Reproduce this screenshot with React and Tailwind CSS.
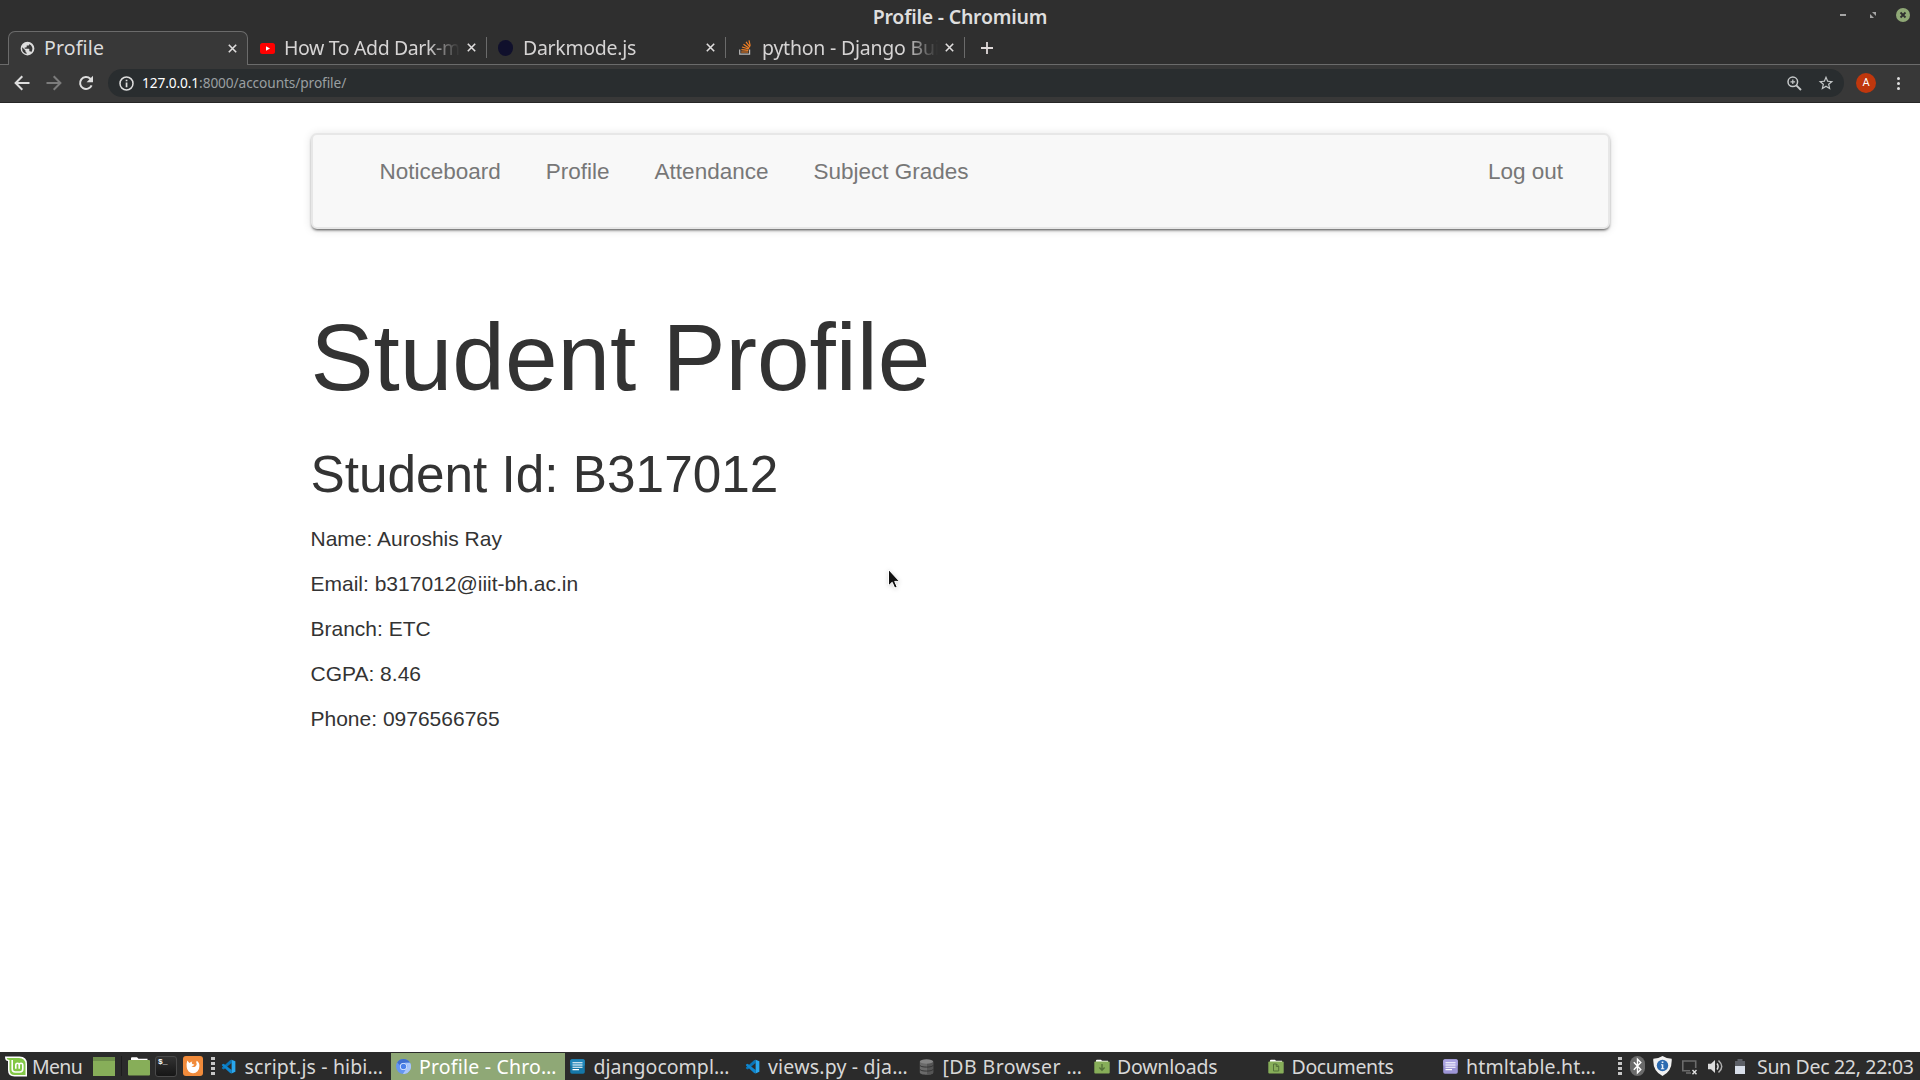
import React from "react";

const UI = "font-['Noto_Sans','Open_Sans',sans-serif]";
const WEB = "font-['Liberation_Sans',Arial,sans-serif]";

const Globe = () => (
  <svg className="size-[15px] shrink-0" viewBox="0 0 24 24" fill="#dedede">
    <path d="M12 1a11 11 0 1 0 0 22 11 11 0 0 0 0-22Zm-1.500 19.600A8.700 8.700 0 0 1 3.400 12c0-.7.1-1.300.2-1.900l5.200 5.200v1c0 1.200.6 2 1.700 2.100v2.200Zm7.400-2.700c-.3-.9-1-1.500-2-1.500h-1v-3.100c0-.6-.4-1-1-1H7.500v-2.100h2.200c.6 0 1-.5 1-1V7.100h2.200c1.100 0 2-.9 2-2v-.5a8.700 8.700 0 0 1 3 13.300Z" />
  </svg>
);
const YouTube = () => (
  <svg className="mt-0.5 h-[11px] w-[15px] shrink-0" viewBox="0 0 15 11">
    <rect width="15" height="11" rx="2.500" fill="#ff0000" />
    <path d="M6 3.200v4.600l4-2.300Z" fill="#fff" />
  </svg>
);
const Disc = () => <span className="h-4 w-[15px] shrink-0 rounded-full bg-[#10102c]" />;
const Stack = () => (
  <svg className="h-[15px] w-3 shrink-0" viewBox="0 0 12 15" fill="none">
    <path d="M.7 9.500v4.600h9.900V9.500" stroke="#bcbbbb" strokeWidth="1.200" />
    <path d="M2.200 12h7M2.400 9.700l6.900.7M3 7l6.700 2M4.500 4.200l5.700 4M7 1.800l4 5.400M10 .3l1.200 5.500" stroke="#f48024" strokeWidth="1.200" />
  </svg>
);
const Close = () => (
  <svg className="size-[9px] shrink-0" viewBox="0 0 9 9" stroke="#e0dede" strokeWidth="1.600">
    <path d="M.8.8l7.400 7.400M8.200.8L.8 8.200" />
  </svg>
);
const VSCode = () => (
  <svg className="size-[15px]" viewBox="0 0 24 24">
    <path d="M17 1v5.500L4.300 16.600 1.500 15.200v-1.700L14.500 1.800Z" fill="#0a75b8" />
    <path d="M17 23v-5.500L4.300 7.400 1.500 8.800v1.700l13 11.700Z" fill="#0f86cf" />
    <path d="M17 1l6 2.700v16.600L17 23Z" fill="#29a7ee" />
  </svg>
);
const Chromium = () => (
  <svg className="size-[15px]" viewBox="0 0 24 24">
    <circle cx="12" cy="12" r="12" fill="#6596f2" />
    <path d="M12 0a12 12 0 0 1 10.400 6H12a6 6 0 0 0-5.600 4L1.900 5.500A12 12 0 0 1 12 0Z" fill="#3f6fd0" />
    <path d="M22.400 6A12 12 0 0 1 11 24l5.600-8.500A6 6 0 0 0 14.500 6Z" fill="#a9c6fb" />
    <circle cx="12" cy="12" r="5.700" fill="#e6efff" />
    <circle cx="12" cy="12" r="4.400" fill="#4a80ea" />
  </svg>
);
const Doc = ({ purple }) => (
  <svg className="size-[15px]" viewBox="0 0 15 15">
    <rect x=".2" y=".2" width="14.600" height="14.600" rx="1.800" fill={purple ? "#9d95d6" : "#1577a8"} />
    <rect x=".2" y=".2" width="14.600" height="7" rx="1.800" fill={purple ? "#aaa3e0" : "#2086ba"} />
    <path d="M2.500 3.700h10M2.500 6h10M2.500 8.300h10M2.500 10.600h6.500" stroke="#fff" strokeWidth="1.100" />
  </svg>
);
const Database = () => (
  <svg className="h-4 w-[15px]" viewBox="0 0 15 16">
    <path d="M.8 2.500v11c0 3 13.400 3 13.400 0v-11Z" fill="#6a6a6a" />
    <path d="M8 2.500h6.200v11c0 1.500-3 2.200-6.200 2.200Z" fill="#555" />
    <ellipse cx="7.500" cy="2.500" rx="6.700" ry="2.200" fill="#858585" />
    <path d="M.8 6.200c0 2.500 13.400 2.500 13.400 0M.8 10.200c0 2.500 13.400 2.500 13.400 0" stroke="#363636" fill="none" />
  </svg>
);
const Folder = ({ kind }) => (
  <svg className="h-[15px] w-4" viewBox="0 0 16 15">
    <path d="M2 3V1.500Q2 .7 3 .7h4l1 1h6V4H2Z" fill="#fff" />
    <rect x=".3" y="2.600" width="15.400" height="11.900" rx="1" fill="#87ae59" />
    {kind === "down" ? (
      <path d="M8 5v6M5.400 8.600 8 11.300l2.600-2.700" stroke="#55723a" strokeWidth="1.400" fill="none" />
    ) : (
      <path d="M5.500 5h3l2.200 2.200V12H5.500ZM8.300 5v2.500h2.400" stroke="#55723a" strokeWidth="1" fill="none" />
    )}
  </svg>
);
const Grip = () => (
  <span className="flex w-1 shrink-0 flex-col gap-px">
    <i className="h-[3px] bg-[#c6c6c6]" />
    <i className="mt-px h-[3px] bg-[#c6c6c6]" />
    <i className="mt-px h-[3px] bg-[#c6c6c6]" />
    <i className="mt-px h-[3px] bg-[#c6c6c6]" />
  </span>
);

const tabs = [
  { title: "How To Add Dark-m", icon: <YouTube />, track: "tracking-[-0.38px]", pad: "pl-3", gap: "w-6" },
  { title: "Darkmode.js", icon: <Disc />, track: "tracking-[-0.3px]", pad: "pl-[11px]", gap: "w-[25px]" },
  { title: "python - Django Bui", icon: <Stack />, track: "tracking-[-0.22px]", pad: "pl-[13px]", gap: "w-[23px]" },
];

const tasks = [
  { t: "script.js - hibi…", icon: <VSCode />, track: "tracking-[0.13px]" },
  { t: "Profile - Chro…", icon: <Chromium />, track: "tracking-[0.2px]", active: true },
  { t: "djangocompl…", icon: <Doc />, track: "tracking-[0.02px]" },
  { t: "views.py - dja…", icon: <VSCode />, track: "tracking-[0.2px]" },
  { t: "[DB Browser …", icon: <Database />, track: "tracking-[0.42px]" },
  { t: "Downloads", icon: <Folder kind="down" />, track: "tracking-[-0.2px]" },
  { t: "Documents", icon: <Folder kind="doc" />, track: "tracking-[-0.35px]" },
  { t: "htmltable.ht…", icon: <Doc purple />, track: "tracking-[0.15px]" },
];

function TitleBar() {
  return (
    <div className="grid h-[31px] grid-cols-[1fr_auto_1fr] items-center">
      <span />
      <span className="pt-[3px] text-[19.500px] font-semibold leading-[28px] tracking-[-0.22px] text-[#dedede]">Profile - Chromium</span>
      <div className="flex items-center justify-end pb-px pr-[10px]">
        <span className="mr-6 h-0.5 w-1.5 bg-[#a5a5a5]" />
        <svg className="mr-5 size-1.5" viewBox="0 0 6 6" fill="#a5a5a5">
          <path d="M2 0h4v4ZM0 2v4h4Z" />
        </svg>
        <svg className="size-[14px]" viewBox="0 0 14 14">
          <circle cx="7" cy="7" r="7" fill="#8fa876" />
          <path d="M4.500 4.500l5 5M9.500 4.500l-5 5" stroke="#2f2f2f" strokeWidth="1.800" />
        </svg>
      </div>
    </div>
  );
}

function TabStrip() {
  return (
    <div className="flex h-[34px]">
      <div className="w-2 shrink-0 border-b border-[#6b6b6b]" />
      <div className="flex h-[34px] w-[240px] shrink-0 items-center rounded-t-[7px] border border-b-0 border-[#6b6b6b] bg-[#383838] pb-px pl-[11px] pr-[10px]">
        <Globe />
        <span className="ml-[9px] flex-1 text-[19.500px] leading-[32px] tracking-[0.15px] text-[#dcdcdc]">Profile</span>
        <Close />
      </div>
      {tabs.map((t) => (
        <div key={t.title} className={"flex h-[34px] w-[239px] shrink-0 items-center border-b border-[#6b6b6b] " + t.pad}>
          <div className={"flex shrink-0 " + t.gap}>{t.icon}</div>
          <span className="w-[176px] shrink-0 whitespace-nowrap [mask-image:linear-gradient(to_right,#000_143px,transparent_176px)]">
            <span className={"text-[19.500px] leading-[33px] text-[#d6d4d4] " + t.track}>{t.title}</span>
          </span>
          <span className="ml-[7px]"><Close /></span>
          <span className="ml-auto h-[21px] w-px bg-[#6b6b6b]" />
        </div>
      ))}
      <div className="flex flex-1 items-center border-b border-[#6b6b6b] pl-4">
        <svg className="size-3" viewBox="0 0 12 12" stroke="#e0dada" strokeWidth="1.800">
          <path d="M6 0v12M0 6h12" />
        </svg>
      </div>
    </div>
  );
}

function Toolbar() {
  return (
    <div className="flex h-[38px] items-center border-b border-[#262626] bg-[#383838] pb-px pl-[14px]">
      <svg className="h-4 w-4" viewBox="0 0 16 16" fill="none" stroke="#dedede" strokeWidth="2">
        <path d="M15.500 8H2M8.300 1.300 1.600 8l6.700 6.700" />
      </svg>
      <svg className="ml-4 h-4 w-4" viewBox="0 0 16 16" fill="none" stroke="#7c7c7c" strokeWidth="2">
        <path d="M.5 8H14M7.700 1.300 14.400 8l-6.700 6.700" />
      </svg>
      <svg className="ml-4 h-4 w-4" viewBox="0 0 16 16" fill="none" stroke="#dedede" strokeWidth="2">
        <path d="M13.600 10.300A6 6 0 1 1 12.300 3.700L14 5.400" />
        <path d="M15 .8v6.400H8.600Z" fill="#dedede" stroke="none" />
      </svg>
      <div className="ml-[14px] flex h-7 w-[1736px] items-center rounded-full bg-[#292d2f] pl-[11px] pr-[10px]">
        <svg className="size-[15px]" viewBox="0 0 15 15">
          <circle cx="7.500" cy="7.500" r="6.500" fill="none" stroke="#dedede" strokeWidth="1.500" />
          <path d="M6.700 3.700h1.700v1.600H6.700ZM6.700 6.500h1.700v4.800H6.700Z" fill="#dedede" />
        </svg>
        <span className="ml-2 flex-1 text-[13.700px] leading-7 tracking-[-0.1px] text-[#9a9fa1]">
          <span className="text-white">127.0.0.1</span>:8000/accounts/profile/
        </span>
        <svg className="size-[15px]" viewBox="0 0 15 15" fill="none" stroke="#c6c9ca">
          <circle cx="5.800" cy="5.800" r="4.800" strokeWidth="1.500" />
          <path d="M9.300 9.300l4.700 4.700" strokeWidth="1.900" />
          <path d="M5.800 3.500v4.600M3.500 5.800h4.600" strokeWidth="1.200" />
        </svg>
        <svg className="ml-4 size-4" viewBox="0 0 24 24" fill="#c6c9ca">
          <path d="M23 9.200l-7.900-.7L12 1.200 8.900 8.500 1 9.200l6 5.200-1.800 7.800 6.800-4.100 6.800 4.100-1.800-7.800 6-5.200Zm-11 6.600-4.100 2.500L9 13.600l-3.600-3.200 4.800-.4L12 5.600l1.800 4.400 4.800.4-3.600 3.200 1.100 4.700-4.100-2.500Z" />
        </svg>
      </div>
      <span className="ml-3 flex size-5 items-center justify-center rounded-full bg-[#c0370d] font-['Roboto',sans-serif] text-[11px] leading-5 text-white">A</span>
      <span className="ml-[21px] flex flex-col gap-0.5">
        <i className="size-[3px] rounded-full bg-[#dedede]" />
        <i className="size-[3px] rounded-full bg-[#dedede]" />
        <i className="size-[3px] rounded-full bg-[#dedede]" />
      </span>
    </div>
  );
}

function Page() {
  return (
    <main className={"relative h-[949px] bg-white pl-[310.500px] pt-[30px] text-[#333] " + WEB}>
      <nav className="ml-[0.500px] flex h-[96px] w-[1299px] items-start justify-between rounded-md border-2 border-[#e7e7e7] bg-[#f8f8f8] pl-[66.500px] pr-[45px] pt-[22px] text-[22.500px] leading-[30px] text-[#777] shadow-[0_2px_3px_-1px_rgba(0,0,0,0.7),0_1px_10px_rgba(0,0,0,0.12)]">
        <div className="flex gap-[45px]">
          <a>Noticeboard</a>
          <a>Profile</a>
          <a>Attendance</a>
          <a>Subject Grades</a>
        </div>
        <a>Log out</a>
      </nav>
      <h1 className="mt-[76px] text-[94.500px] leading-[104px]">Student Profile</h1>
      <h2 className="mt-[38px] text-[51.300px] leading-[56px]">Student Id: B317012</h2>
      <div className="mt-[21px] flex flex-col gap-[15px] text-[21px] leading-[30px]">
        <p>Name: Auroshis Ray</p>
        <p>Email: b317012@iiit-bh.ac.in</p>
        <p>Branch: ETC</p>
        <p>CGPA: 8.46</p>
        <p>Phone: 0976566765</p>
      </div>
      <svg className="absolute left-[887px] top-[465px] h-[22px] w-[14px] drop-shadow-sm" viewBox="0 0 14 22">
        <path d="M1.500 1.500v16.200l3.700-3.400 2.500 5.800 2.500-1.100-2.500-5.600h4.800Z" fill="#111" stroke="#fff" strokeWidth="1" />
      </svg>
    </main>
  );
}

function Taskbar() {
  return (
    <footer className="flex h-7 items-center bg-[#2b2b2b] text-[19.500px] leading-[27px] text-[#d8d8d8]">
      <svg className="ml-[5px] h-[21px] w-[22px] shrink-0" viewBox="0 0 22 21">
        <path d="M0 .5h14.500Q22 .5 22 8v12.500H9.500Q3 20.500 3 14V5Q0 5 0 .5Z" fill="#fff" />
        <path d="M1.500 2H14q6.500 0 6.500 6.500V19h-11Q4.500 19 4.500 14V4Q2 4 1.500 2Z" fill="#83c847" />
        <path d="M7.200 4v9q0 3 3 3h4.600q3 0 3-3V9.300q0-2-1.800-2t-1.800 2v3.500m0-3.500q0-2-1.700-2t-1.700 2v3.500" fill="none" stroke="#fff" strokeWidth="1.600" />
      </svg>
      <span className="ml-[5px] w-[55px] shrink-0 whitespace-nowrap tracking-[-0.7px]">Menu</span>
      <span className="ml-1.5 h-[19px] w-[22px] shrink-0 border-t-4 border-[#6e8f4b] bg-[#87ae59]" />
      <span className="ml-[6px] h-5 w-px shrink-0 bg-[#1d1d1d]" />
      <svg className="ml-1.5 h-[19px] w-[22px] shrink-0" viewBox="0 0 22 19">
        <path d="M3 4V1.200Q3 .3 4 .3h5l1.500 1.500H19.500V4Z" fill="#fff" />
        <rect y="3" width="22" height="15.500" rx="1" fill="#87ae59" />
      </svg>
      <span className="ml-[5px] h-[21px] w-[22px] shrink-0 rounded-[3px] border border-[#4a4a4a] bg-gradient-to-b from-[#333] to-[#161616] pl-0.5 font-['Liberation_Mono',monospace] text-[8px] font-bold leading-[10px] text-white">$_</span>
      <svg className="ml-[6px] size-5 shrink-0" viewBox="0 0 20 20">
        <rect width="20" height="20" rx="3" fill="#f18b3b" />
        <path d="M4.300 4.500 6.400 7q1.500-1.500 3-1.500-1.500 1.700.5 2.700l1.500.3q-1 1.800-3 1.500 1.800 1.800 4 .4 2-1.500.8-4.200l.6-1.500q3.200 2.300 2.500 6A6.300 6.300 0 0 1 3.700 11Q3.200 8 4.300 4.500Z" fill="#fff" />
      </svg>
      <span className="ml-2"><Grip /></span>
      <div className="ml-px flex h-full">
        {tasks.map((k) => (
          <div
            key={k.t}
            className={"mt-px flex h-[27px] w-[174.500px] shrink-0 items-center whitespace-nowrap pl-[5px] " + (k.active ? "bg-[#8fa876] text-white" : "")}
          >
            <span className="flex w-[23.500px] shrink-0">{k.icon}</span>
            <span className={k.track}>{k.t}</span>
          </div>
        ))}
      </div>
      <span className="ml-1.5"><Grip /></span>
      <svg className="ml-2 h-[20px] w-[15px] shrink-0" viewBox="0 0 15 20">
        <rect width="15" height="20" rx="7.500" fill="#6a6a6a" />
        <path d="M3.800 6.200l7 7.200-3.300 3.300V3.300l3.300 3.300-7 7.200" fill="none" stroke="#fff" strokeWidth="1.400" />
      </svg>
      <svg className="ml-2 h-5 w-[19px] shrink-0" viewBox="0 0 19 20">
        <path d="M9.500 0q4 2.700 9.200 2.700Q19.500 15 9.500 20-.5 15 .3 2.700 5.500 2.700 9.500 0Z" fill="#f1f1f1" />
        <circle cx="9.500" cy="9.500" r="5.700" fill="#2b6ab0" />
        <path d="M8.700 5.600h1.700v1.500H8.700ZM8 8.200h2.300v4h1v1H7.900v-1h.9v-3H8Z" fill="#e8f0fa" />
      </svg>
      <svg className="ml-[10px] mt-0.5 h-[15px] w-[15px] shrink-0" viewBox="0 0 15 15" fill="none">
        <path d="M8 10.700H.8V1h12.900v7" stroke="#6c6c6c" strokeWidth="1.600" />
        <path d="M4 13h5" stroke="#6c6c6c" strokeWidth="1.600" />
        <path d="M10.500 10l4 4.200M14.500 10l-4 4.200" stroke="#e0e0e0" strokeWidth="1.400" />
      </svg>
      <svg className="ml-[11px] h-[15px] w-[15px] shrink-0" viewBox="0 0 15 15" fill="none">
        <path d="M0 4.800h3L7 1v13l-4-3.800H0Z" fill="#dcdcdc" />
        <path d="M9 4.500q2.200 3 0 6" stroke="#dcdcdc" strokeWidth="1.500" />
        <path d="M10.500 1.500q6.500 6 0 12" stroke="#b0b0b0" strokeWidth="1.500" />
      </svg>
      <svg className="ml-[12px] h-[15px] w-[10px] shrink-0" viewBox="0 0 10 15">
        <path d="M2.500 0h5v2H10v13H0V2h2.500Z" fill="#5c5f66" />
        <path d="M0 7h10v8H0Z" fill="#d8dee9" />
      </svg>
      <span className="ml-3 whitespace-nowrap tracking-[-0.32px]">Sun Dec 22, 22:03</span>
    </footer>
  );
}

export default function App() {
  return (
    <div className={"h-[1080px] w-[1920px] overflow-hidden bg-[#2f2f2f] " + UI}>
      <TitleBar />
      <TabStrip />
      <Toolbar />
      <Page />
      <Taskbar />
    </div>
  );
}
